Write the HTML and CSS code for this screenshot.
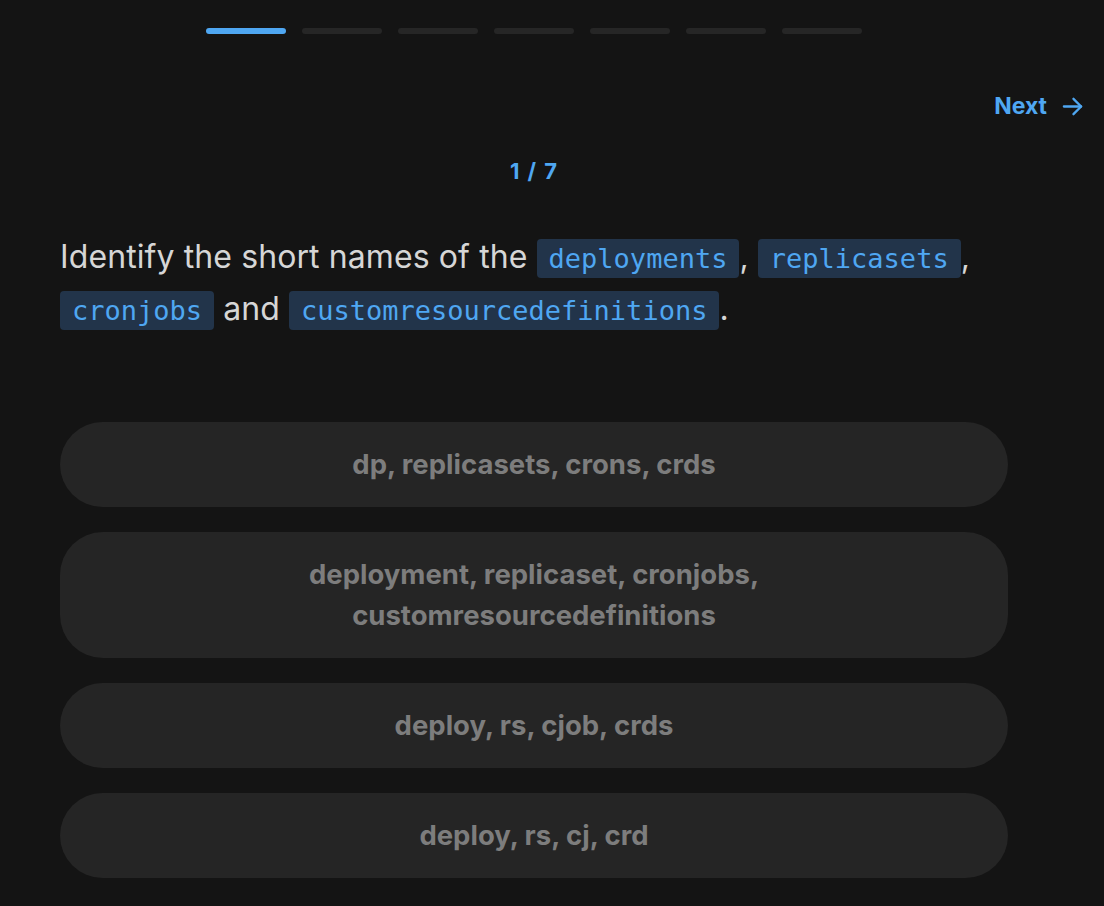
FILE: index.html
```html
<!DOCTYPE html>
<html lang="en">
<head>
<meta charset="utf-8">
<title>Quiz</title>
<link rel="stylesheet" href="styles.css">
</head>
<body>
<div class="page">
  <div class="progress">
    <span class="seg active"></span>
    <span class="seg"></span>
    <span class="seg"></span>
    <span class="seg"></span>
    <span class="seg"></span>
    <span class="seg"></span>
    <span class="seg"></span>
  </div>
  <div class="topbar">
    <button class="next">Next
      <svg class="arrow" width="23" height="23" viewBox="0 0 24 24" fill="none" stroke="currentColor" stroke-width="2.4" stroke-linecap="round" stroke-linejoin="round"><path d="M3 12h18"/><path d="M13 4l8 8-8 8"/></svg>
    </button>
  </div>
  <div class="counter">1 / 7</div>
  <p class="question">Identify the short names of the <code>deployments</code>, <code>replicasets</code>, <code>cronjobs</code> and <code>customresourcedefinitions</code>.</p>
  <div class="options">
    <button class="option">dp, replicasets, crons, crds</button>
    <button class="option">deployment, replicaset, cronjobs, customresourcedefinitions</button>
    <button class="option">deploy, rs, cjob, crds</button>
    <button class="option">deploy, rs, cj, crd</button>
  </div>
</div>
</body>
</html>
```
FILE: styles.css
```css
html, body {
  margin: 0;
  padding: 0;
  background: #141414;
}
body {
  font-family: Inter, "Noto Sans", sans-serif;
  color: #d6d6d6;
}
.page {
  width: 948px;
  padding: 28px 0 0 60px;
}
.progress {
  display: flex;
  justify-content: center;
  gap: 16px;
}
.seg {
  width: 80px;
  height: 6px;
  border-radius: 3px;
  background: #262626;
}
.seg.active {
  background: #4fa7f2;
}
.topbar {
  display: flex;
  justify-content: flex-end;
  margin-right: -76px;
  margin-top: 55px;
}
.next {
  display: flex;
  align-items: center;
  gap: 14px;
  background: none;
  border: none;
  padding: 0;
  color: #4fa7f2;
  font-family: Inter, sans-serif;
  font-weight: 700;
  font-size: 23px;
  line-height: 34px;
  cursor: pointer;
}
.arrow {
  display: block;
}
.counter {
  margin-top: 33px;
  text-align: center;
  color: #4fa7f2;
  font-weight: 700;
  font-size: 22px;
  letter-spacing: 1px;
  word-spacing: 1px;
  line-height: 30px;
}
.question {
  margin: 46px 0 0 0;
  font-size: 32px;
  letter-spacing: 0.1px;
  line-height: 50px;
  color: #d6d6d6;
}
.question code {
  font-family: "DejaVu Sans Mono", monospace;
  font-size: 27px;
  letter-spacing: 0;
  background: #22344a;
  color: #4fa7f2;
  padding: 4px 12px;
  border-radius: 4px;
}
.options {
  margin-top: 86px;
  display: flex;
  flex-direction: column;
  gap: 25px;
}
.option {
  display: block;
  width: 100%;
  background: #252525;
  border: none;
  border-radius: 43px;
  padding: 22px 200px;
  color: #7d7d7d;
  font-family: Inter, sans-serif;
  font-weight: 700;
  font-size: 27.5px;
  line-height: 41px;
  text-align: center;
  cursor: pointer;
}
```
